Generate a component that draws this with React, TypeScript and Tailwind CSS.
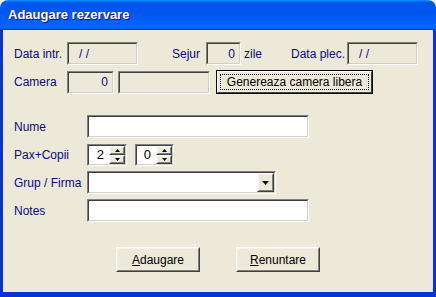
const font = "font-['Liberation_Sans',Arial,sans-serif]";
const label = "text-[12px] text-[#0b0b7c]";
const sunkOuter =
  "border border-t-[#808080] border-l-[#808080] border-b-white border-r-white";
const sunkInner =
  "border border-t-[#404040] border-l-[#404040] border-b-[#d4d0c8] border-r-[#d4d0c8]";
const raisedOuter =
  "border border-t-white border-l-white border-b-[#404040] border-r-[#404040]";
const raisedInner =
  "border border-t-[#f4f2ea] border-l-[#f4f2ea] border-b-[#808080] border-r-[#808080]";

function Field({
  w,
  value,
  align = 'left',
  white = false,
  pad = 'px-[4px]',
}: {
  w: string;
  value?: string;
  align?: 'left' | 'right';
  white?: boolean;
  pad?: string;
}) {
  return (
    <div className={`${w} h-[23px] ${sunkOuter}`}>
      <div
        className={`flex h-full items-center ${pad} ${sunkInner} ${
          white ? 'bg-white' : 'bg-[#ece9d8]'
        } ${align === 'right' ? 'justify-end' : 'justify-start'}`}
      >
        <span className="whitespace-pre text-[12px] text-[#0b0b7c]">{value}</span>
      </div>
    </div>
  );
}

function Arrow({ up }: { up?: boolean }) {
  return (
    <svg width="5" height="3" viewBox="0 0 5 3">
      <path d={up ? 'M2.5 0 L5 3 L0 3 Z' : 'M0 0 L5 0 L2.5 3 Z'} fill="#000" />
    </svg>
  );
}

function MiniButton({ children, className }: { children: React.ReactNode; className: string }) {
  return (
    <div className={`${className} bg-[#ece9d8] ${raisedOuter}`}>
      <div className={`flex h-full w-full items-center justify-center ${raisedInner}`}>
        {children}
      </div>
    </div>
  );
}

function Spinner({ w, value }: { w: string; value: string }) {
  return (
    <div className={`${w} h-[22px] ${sunkOuter}`}>
      <div className={`flex h-full bg-white ${sunkInner}`}>
        <div className="flex flex-1 items-center justify-end pr-[5px] text-[13px] text-black">
          {value}
        </div>
        <div className="flex w-[16px] flex-col">
          <MiniButton className="h-[9px] w-full">
            <Arrow up />
          </MiniButton>
          <MiniButton className="h-[9px] w-full">
            <Arrow />
          </MiniButton>
        </div>
      </div>
    </div>
  );
}

function Button({ children, w }: { children: React.ReactNode; w: string }) {
  return (
    <div className={`${w} h-[25px] bg-[#ece9d8] ${raisedOuter}`}>
      <div
        className={`flex h-full items-center justify-center text-[12px] text-black ${raisedInner}`}
      >
        {children}
      </div>
    </div>
  );
}

export default function App() {
  return (
    <div className={`${font} flex h-[297px] w-[436px] flex-col bg-white`}>
      {/* title bar */}
      <div className="flex h-[30px] items-center rounded-t-[8px] bg-[linear-gradient(180deg,#0997ff,#0058ee_8%,#0055ee_40%,#0066ff_88%,#0066ff_93%,#005bff_95%,#003dd7_96%,#003dd7)] pl-[8px]">
        <span className="pb-[1px] text-[13px] font-bold text-white [text-shadow:1px_1px_#0f1089]">
          Adaugare rezervare
        </span>
      </div>

      {/* client */}
      <div className="flex-1 border-x-[3px] border-b-[5px] border-x-[#0831d9] border-b-[#0831d9] bg-[#ece9d8] pr-[1px]">
        <div className="flex flex-col pl-[11px] pt-[12px]">
          {/* row 1 */}
          <div className="flex items-center">
            <span className={`${label} w-[53px]`}>Data intr.</span>
            <Field w="w-[71px]" value="/ /" pad="pl-[10px]" />
            <span className={`${label} w-[68px] pr-[6px] text-right`}>Sejur</span>
            <Field w="w-[35px]" value="0" align="right" />
            <span className={`${label} w-[50px] pl-[3px]`}>zile</span>
            <span className={`${label} w-[56px]`}>Data plec.</span>
            <Field w="w-[71px]" value="/ /" pad="pl-[10px]" />
          </div>

          {/* row 2 */}
          <div className="mt-[5px] flex items-center">
            <span className={`${label} w-[53px]`}>Camera</span>
            <Field w="w-[47px]" value="0" align="right" />
            <div className="ml-[4px]">
              <Field w="w-[92px]" />
            </div>
            <div className="ml-[6px] h-[24px] w-[157px] border border-black bg-[#ece9d8]">
              <div className={`h-full p-[2px] ${raisedOuter}`}>
                <div className="flex h-full items-center justify-center border border-dotted border-black text-[12px] text-black">
                  Genereaza camera libera
                </div>
              </div>
            </div>
          </div>

          {/* Nume */}
          <div className="mt-[21px] flex items-center">
            <span className={`${label} w-[73px]`}>Nume</span>
            <Field w="w-[222px]" white />
          </div>

          {/* Pax */}
          <div className="mt-[6px] flex items-center">
            <span className={`${label} w-[73px]`}>Pax+Copii</span>
            <Spinner w="w-[40px]" value="2" />
            <div className="ml-[8px]">
              <Spinner w="w-[39px]" value="0" />
            </div>
          </div>

          {/* Grup */}
          <div className="mt-[5px] flex items-center">
            <span className={`${label} w-[73px]`}>Grup / Firma</span>
            <div className={`h-[23px] w-[189px] ${sunkOuter}`}>
              <div className={`flex h-full justify-end bg-white ${sunkInner}`}>
                <MiniButton className="h-full w-[17px]">
                  <svg width="7" height="4" viewBox="0 0 7 4">
                    <path d="M0 0 L7 0 L3.5 4 Z" fill="#000" />
                  </svg>
                </MiniButton>
              </div>
            </div>
          </div>

          {/* Notes */}
          <div className="mt-[5px] flex items-center">
            <span className={`${label} w-[73px]`}>Notes</span>
            <Field w="w-[222px]" white />
          </div>

          {/* buttons */}
          <div className="mt-[25px] flex gap-[36px] pl-[102px]">
            <Button w="w-[84px]">
              <span>
                <u>A</u>daugare
              </span>
            </Button>
            <Button w="w-[84px]">
              <span>
                <u>R</u>enuntare
              </span>
            </Button>
          </div>
        </div>
      </div>
    </div>
  );
}
